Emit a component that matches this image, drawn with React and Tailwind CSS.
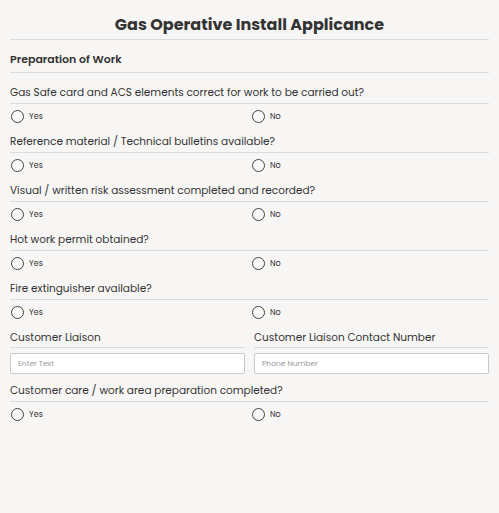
const questions = [
  "Gas Safe card and ACS elements correct for work to be carried out?",
  "Reference material / Technical bulletins available?",
  "Visual / written risk assessment completed and recorded?",
  "Hot work permit obtained?",
  "Fire extinguisher available?",
];

function Radio({ label }) {
  return (
    <label className="flex items-center gap-[5px]">
      <span className="w-[13px] h-[13px] rounded-full border border-[#444] bg-white/40" />
      <span className="text-[8px] text-[#333]">{label}</span>
    </label>
  );
}

function YesNo() {
  return (
    <div className="grid grid-cols-2 gap-[8px] h-[25px] items-center pl-[1px]">
      <Radio label="Yes" />
      <div className="-ml-[2px]">
        <Radio label="No" />
      </div>
    </div>
  );
}

function Question({ text, first }) {
  return (
    <div>
      <p
        className={`${first ? "pt-[11px]" : "pt-[4px]"} pb-[1px] leading-[18px] text-[10.5px] text-[#333] border-b border-[#dcdcdc]`}
      >
        {text}
      </p>
      <YesNo />
    </div>
  );
}

export default function App() {
  return (
    <div
      className="min-h-[513px] bg-[#f7f6f4] px-[10px]"
      style={{ fontFamily: "Poppins, Inter, 'Noto Sans', sans-serif" }}
    >
      <h1 className="pt-[14px] pb-[4px] text-center text-[16px] leading-[21px] font-bold text-[#333] border-b border-[#dcdcdc]">
        Gas Operative Install Applicance
      </h1>
      <h2 className="pt-[12px] pb-[6px] text-[11px] leading-[14px] font-semibold text-[#333] border-b border-[#dcdcdc]">
        Preparation of Work
      </h2>
      {questions.map((q, i) => (
        <Question key={q} text={q} first={i === 0} />
      ))}
      <div className="grid grid-cols-2 gap-[9px]">
        <div>
          <p className="pt-[4px] pb-[1px] leading-[17px] text-[10.5px] text-[#333] border-b border-[#dcdcdc]">
            Customer Liaison
          </p>
          <input
            placeholder="Enter Text"
            className="mt-[5px] w-full h-[21px] px-[7px] text-[7.5px] bg-white border border-[#c9c9c9] rounded-[2px] outline-none placeholder:text-[#999]"
          />
        </div>
        <div>
          <p className="pt-[4px] pb-[1px] leading-[17px] text-[10.5px] text-[#333] border-b border-[#dcdcdc]">
            Customer Liaison Contact Number
          </p>
          <input
            placeholder="Phone Number"
            className="mt-[5px] w-full h-[21px] px-[7px] text-[7.5px] bg-white border border-[#c9c9c9] rounded-[2px] outline-none placeholder:text-[#999]"
          />
        </div>
      </div>
      <div>
        <p className="pt-[8px] pb-[1px] leading-[18px] text-[10.5px] text-[#333] border-b border-[#dcdcdc]">
          Customer care / work area preparation completed?
        </p>
        <YesNo />
      </div>
    </div>
  );
}
